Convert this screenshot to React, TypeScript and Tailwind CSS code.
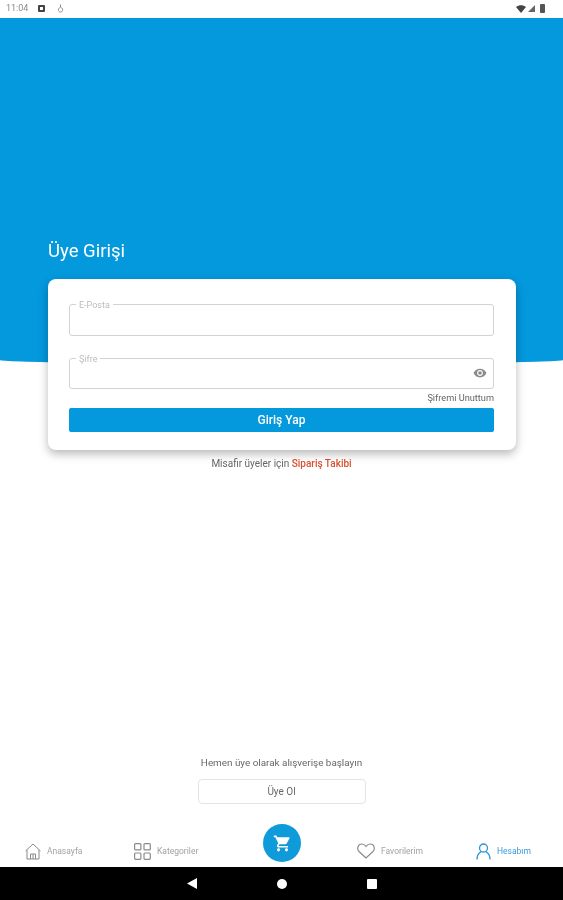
import { MdShoppingCart, MdVisibility } from "react-icons/md";

const font = { fontFamily: "Roboto, sans-serif" };

function Field({ label, eye, className }: { label: string; eye?: boolean; className?: string }) {
  return (
    <fieldset className={`relative rounded-[3px] border-[1.5px] border-[#d2d2d2] pl-[6px] ${className ?? ""}`}>
      <legend className="ml-0 px-[3px] pt-[2px] text-[9px] leading-[3px] text-[#bcbcbc]">{label}</legend>
      {eye && <MdVisibility className="absolute right-[6px] top-[5px] text-[14px] text-[#8a8a8a]" />}
    </fieldset>
  );
}

function NavItem({ icon, label, active, className }: { icon: React.ReactNode; label: string; active?: boolean; className?: string }) {
  return (
    <div className={`flex items-center gap-[6px] ${className ?? ""}`}>
      {icon}
      <span className={`text-[8.5px] ${active ? "text-[#3a9ad9]" : "text-[#a2a2a2]"}`}>{label}</span>
    </div>
  );
}

export default function App() {
  return (
    <div style={font} className="flex h-[900px] w-[563px] flex-col overflow-hidden bg-white blur-[0.6px]">
      {/* status bar */}
      <div className="flex h-[18px] shrink-0 items-center justify-between px-[6px] pb-[1px] text-[#777]">
        <div className="flex items-center">
          <span className="text-[9px] leading-none text-[#8a8a8a]">11:04</span>
          <span className="ml-[10px] h-[7px] w-[7px] rounded-[1px] border-2 border-[#444]" />
          <svg className="ml-[12px]" width="7" height="9" viewBox="0 0 7 9">
            <path d="M3.5 0.5 L3.5 3 M3.5 3 C5 4 6 5 5.5 6.5 C5 8.5 2 8.5 1.5 6.5 C1 5 2 4 3.5 3" fill="none" stroke="#888" strokeWidth="1" />
          </svg>
        </div>
        <div className="mr-[12px] flex items-center gap-[2px]">
          <svg width="10" height="8" viewBox="0 0 10 8"><path d="M0 2 C3 -0.5 7 -0.5 10 2 L5 8 Z" fill="#444" /></svg>
          <svg width="7" height="7" viewBox="0 0 7 7"><path d="M7 0 V7 H0 Z" fill="#666" /></svg>
          <span className="ml-[3px] h-[9px] w-[5px] rounded-[1px] bg-[#555]" />
        </div>
      </div>

      {/* blue header */}
      <div className="flex h-[346px] shrink-0 flex-col justify-end rounded-b-[50%_4px] bg-[#0498dd] px-[48px]">
        <h1 className="mb-[101px] text-[18.5px] font-normal leading-[24px] text-white">Üye Girişi</h1>
      </div>

      {/* card */}
      <div className="relative ml-[48px] mr-[47px] -mt-[85px] flex h-[171px] shrink-0 flex-col rounded-[8px] bg-white pl-[21px] pr-[22px] pt-[23px] shadow-[0_4px_10px_rgba(0,0,0,0.28)]">
        <Field label="E-Posta" className="h-[34px]" />
        <Field label="Şifre" eye className="mt-[20px] h-[33px]" />
        <div className="mt-[3px] text-right text-[9.2px] leading-[11px] text-[#666]">Şifremi Unuttum</div>
        <button className="mt-[5px] h-[24px] rounded-[2px] bg-[#0498dd] text-[12px] font-medium text-white">Giriş Yap</button>
      </div>

      <p className="mt-[8px] text-center text-[10px] leading-[12px] text-[#666]">
        Misafir üyeler için <span className="font-medium text-[#d9502e]">Sipariş Takibi</span>
      </p>

      {/* sign up */}
      <div className="mt-auto flex flex-col items-center">
        <p className="text-[9.9px] leading-[12px] text-[#666]">Hemen üye olarak alışverişe başlayın</p>
        <button className="mt-[10px] h-[25px] w-[168px] rounded-[4px] border border-[#e4e4e4] text-[10px] text-[#666]">Üye Ol</button>
      </div>

      {/* bottom nav */}
      <div className="relative mt-[23px] flex h-[40px] shrink-0 items-center pl-[25px] pt-[8px]">
        <NavItem
          label="Anasayfa"
          className="w-[109px]"
          icon={
            <svg width="16" height="17" viewBox="0 0 16 17" fill="none" stroke="#8a8a8a" strokeWidth="1">
              <path d="M0.5 8 L8 1 L15.5 8 M2 7 V16 H14 V7 M5.5 16 V11 H10.5 V16 M8 11 V16" />
            </svg>
          }
        />
        <NavItem
          label="Kategoriler"
          className="w-[223px]"
          icon={
            <svg width="17" height="17" viewBox="0 0 17 17" fill="none" stroke="#8a8a8a" strokeWidth="1.2">
              <rect x="0.6" y="0.6" width="6.3" height="6.3" rx="1" />
              <rect x="10" y="0.6" width="6.3" height="6.3" rx="1" />
              <rect x="0.6" y="10" width="6.3" height="6.3" rx="1" />
              <rect x="10" y="10" width="6.3" height="6.3" rx="1" />
            </svg>
          }
        />
        <NavItem
          label="Favorilerim"
          className="w-[119px]"
          icon={
            <svg width="18" height="16" viewBox="0 0 18 16" fill="none" stroke="#8a8a8a" strokeWidth="1.2">
              <path d="M9 15 L2 8.5 C-0.5 6 0.8 1 4.8 1 C6.8 1 8 2 9 3.5 C10 2 11.2 1 13.2 1 C17.2 1 18.5 6 16 8.5 Z" />
            </svg>
          }
        />
        <NavItem
          label="Hesabım"
          active
          icon={
            <svg width="15" height="17" viewBox="0 0 15 17" fill="none" stroke="#2f95dc" strokeWidth="1.3">
              <circle cx="7.5" cy="5" r="4" />
              <path d="M1 16.5 C1 12 3.5 9.5 5.2 8.6 M14 16.5 C14 12 11.5 9.5 9.8 8.6" />
            </svg>
          }
        />
        <div className="absolute left-[263px] top-[-3px] flex h-[38px] w-[38px] items-center justify-center rounded-full bg-[#0f9ad9]">
          <MdShoppingCart className="text-[19px] text-white" />
        </div>
      </div>

      {/* android nav */}
      <div className="flex h-[33px] shrink-0 items-center justify-center gap-[80px] bg-black">
        <svg width="10" height="11" viewBox="0 0 10 11"><path d="M10 0 V11 L0 5.5 Z" fill="#fff" /></svg>
        <span className="h-[10px] w-[10px] rounded-full bg-white" />
        <span className="h-[10px] w-[10px] rounded-[1px] bg-white" />
      </div>
    </div>
  );
}
